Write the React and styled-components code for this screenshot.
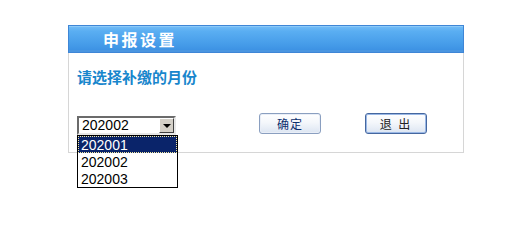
import React from "react";
import styled, { createGlobalStyle } from "styled-components";

const Global = createGlobalStyle`
  html, body { margin: 0; padding: 0; background: #fff; }
  body { font-family: "Liberation Sans", Arial, "Noto Sans CJK SC", sans-serif; }
`;

const Page = styled.div`
  min-height: 222px;
  box-sizing: border-box;
  padding: 25px 0 0 68px;
`;

const Panel = styled.div`
  width: 396px;
`;

const Header = styled.div`
  height: 28px;
  box-sizing: border-box;
  border: 1px solid #3f86d6;
  background: linear-gradient(#74bdf7 0%, #5aaef2 20%, #469ce9 70%, #3a8fe2 100%);
  box-shadow: inset 0 1px 0 #8ccaf9, inset 0 -2px 0 #4a95e0;
  display: flex;
  align-items: center;
  padding-left: 34px;
`;

const Title = styled.h1`
  margin: 0;
  font-family: "Noto Sans CJK SC", sans-serif;
  font-size: 16px;
  font-weight: bold;
  letter-spacing: 2.5px;
  color: #fff;
  line-height: 20px;
`;

const Body = styled.div`
  height: 100px;
  box-sizing: border-box;
  border: 1px solid #d6d6d6;
  border-top: none;
  padding: 14px 8px 0 8px;
`;

const Subtitle = styled.div`
  font-family: "Noto Sans CJK SC", sans-serif;
  font-size: 15px;
  font-weight: bold;
  color: #1886cc;
  line-height: 20px;
`;

const Row = styled.div`
  display: flex;
  align-items: flex-start;
  margin-top: 26px;
`;

const SelectWrap = styled.div`
  position: relative;
  margin-top: 3px;
`;

const SelectBox = styled.div`
  width: 99px;
  height: 19px;
  box-sizing: border-box;
  border-style: solid;
  border-width: 2px;
  border-color: #6b6b6b #e8e8e8 #e8e8e8 #6b6b6b;
  background: #fff;
  display: flex;
  align-items: stretch;
`;

const SelectValue = styled.div`
  flex: 1;
  font-size: 14px;
  line-height: 15px;
  padding-left: 3px;
  color: #000;
`;

const ArrowButton = styled.div`
  width: 15px;
  box-sizing: border-box;
  background: #d4d0c8;
  border-style: solid;
  border-width: 1px;
  border-color: #fff #404040 #404040 #fff;
  display: flex;
  align-items: center;
  justify-content: center;
`;

const Arrow = styled.div`
  width: 0;
  height: 0;
  border-left: 4px solid transparent;
  border-right: 4px solid transparent;
  border-top: 4px solid #000;
  margin-top: 1px;
`;

const ListBox = styled.div`
  position: absolute;
  left: 0;
  top: 19px;
  width: 101px;
  box-sizing: border-box;
  border: 1px solid #000;
  background: #fff;
  padding: 0;
  z-index: 2;
`;

const Option = styled.div`
  height: 17px;
  box-sizing: border-box;
  font-size: 14px;
  line-height: 16px;
  padding: 1px 0 0 3px;
  color: ${(p) => (p.$selected ? "#fff" : "#000")};
  background: ${(p) => (p.$selected ? "#0a246a" : "#fff")};
  outline: ${(p) => (p.$selected ? "1px dotted #f4e8a0" : "none")};
  outline-offset: -1px;
`;

const Button = styled.button`
  width: 62px;
  height: 21px;
  margin-left: ${(p) => p.$gap}px;
  padding: 0;
  border: 1px solid ${(p) => (p.$focus ? "#45679f" : "#8a9fc0")};
  border-radius: 3px;
  background: linear-gradient(#ffffff 0%, #f4f7fb 45%, #dce5f2 100%);
  box-shadow: ${(p) => (p.$focus ? "inset 0 0 0 1px #9ab8e6" : "inset 0 0 0 1px #e9eef7")};
  font-family: "Noto Sans CJK SC", sans-serif;
  font-size: 12px;
  letter-spacing: ${(p) => p.$spacing}px;
  color: ${(p) => p.$color};
  line-height: 17px;
  cursor: pointer;
`;

const options = ["202001", "202002", "202003"];

export default function App() {
  return (
    <>
      <Global />
      <Page>
        <Panel>
          <Header>
            <Title>申报设置</Title>
          </Header>
          <Body>
            <Subtitle>请选择补缴的月份</Subtitle>
            <Row>
              <SelectWrap>
                <SelectBox>
                  <SelectValue>202002</SelectValue>
                  <ArrowButton>
                    <Arrow />
                  </ArrowButton>
                </SelectBox>
                <ListBox>
                  {options.map((o) => (
                    <Option key={o} $selected={o === "202001"}>
                      {o}
                    </Option>
                  ))}
                </ListBox>
              </SelectWrap>
              <Button $gap={83} $color="#0d2f6e" $spacing={1}>确定</Button>
              <Button $gap={44} $focus $color="#222" $spacing={2}>退 出</Button>
            </Row>
          </Body>
        </Panel>
      </Page>
    </>
  );
}
